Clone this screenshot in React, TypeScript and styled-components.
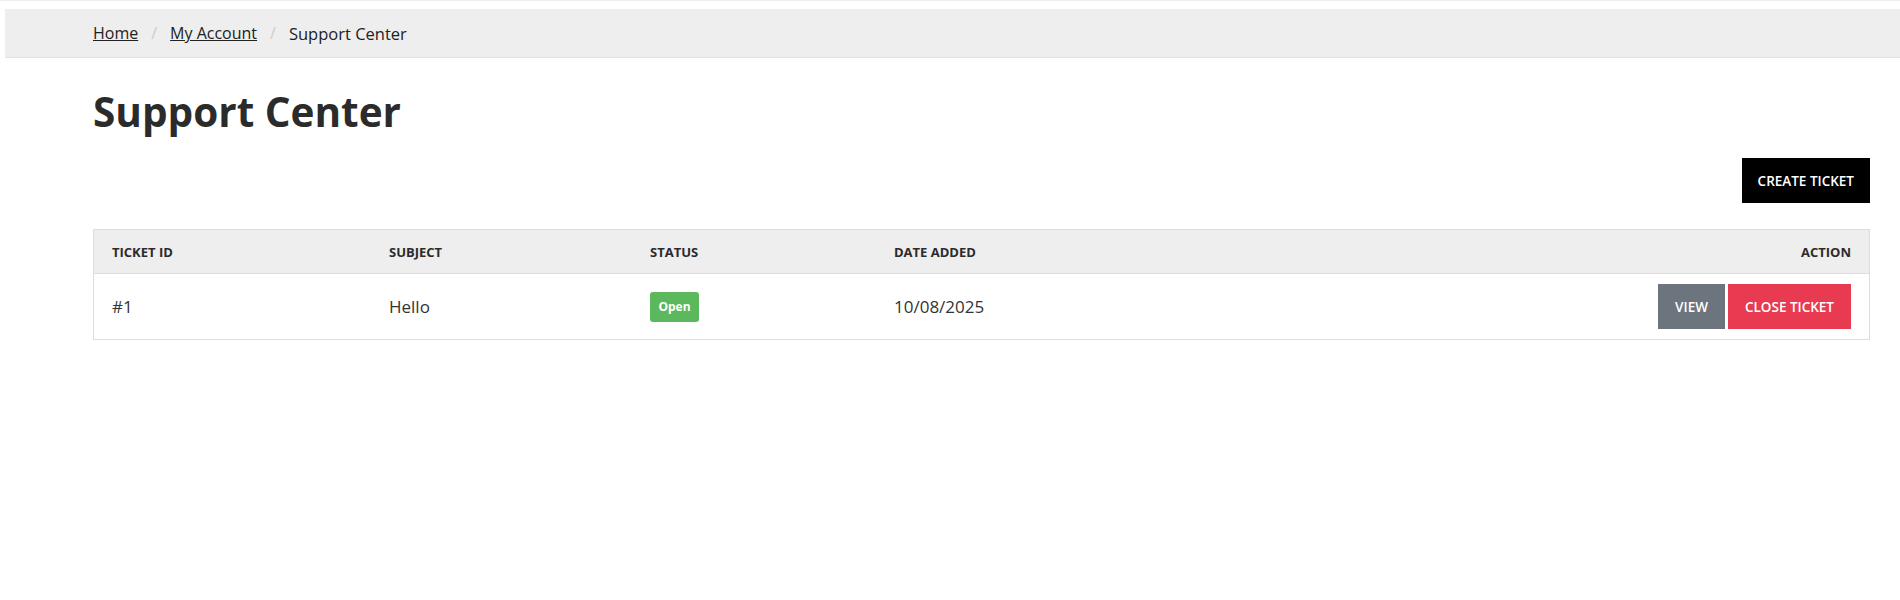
import styled, { createGlobalStyle } from "styled-components";

const GlobalStyle = createGlobalStyle`
    body {
        margin: 0;
        background: #fff;
        font-family: "Open Sans", "Liberation Sans", sans-serif;
        color: #333;
    }
`;

const Page = styled.div`
    padding: 8px 0 0 5px;
    border-top: 1px solid #eee;
`;

const Breadcrumb = styled.nav`
    display: flex;
    align-items: center;
    height: 48px;
    padding-left: 88px;
    background: #eee;
    border-bottom: 1px solid #e2e2e2;
    font-size: 16px;

    a {
        color: #222;
        text-decoration: underline;
    }

    span.sep {
        color: #ccc;
        padding: 0 13px;
    }

    span.current {
        color: #222;
        font-size: 16.5px;
    }
`;

const Container = styled.main`
    padding: 0 30px 0 88px;
`;

const Title = styled.h1`
    margin: 29px 0 0;
    font-size: 40.5px;
    font-weight: 700;
    line-height: 50px;
    color: #2b2b2b;
`;

const Toolbar = styled.div`
    display: flex;
    justify-content: flex-end;
    margin-top: 21px;
`;

const Button = styled.button<{ $variant: "dark" | "grey" | "red" }>`
    border: none;
    font-family: inherit;
    font-size: 13.5px;
    font-weight: 600;
    text-transform: uppercase;
    color: #fff;
    height: 45px;
    padding: 0 ${props => (props.$variant === "dark" ? "16px" : "17px")};
    cursor: pointer;
    background: ${props =>
        props.$variant === "dark" ? "#000" : props.$variant === "grey" ? "#6c757d" : "#e83a50"};
`;

const Table = styled.div`
    margin-top: 26px;
    border: 1px solid #ddd;
`;

const Row = styled.div<{ $head?: boolean }>`
    display: grid;
    grid-template-columns: 277px 261px 244px 1fr auto;
    align-items: center;
    padding: 0 18px;
    height: ${props => (props.$head ? "43px" : "65px")};
    background: ${props => (props.$head ? "#eee" : "#fff")};
    border-bottom: ${props => (props.$head ? "1px solid #ddd" : "none")};
    font-size: ${props => (props.$head ? "13px" : "17px")};
    font-weight: ${props => (props.$head ? 700 : 400)};
    color: ${props => (props.$head ? "#2b2b2b" : "#333")};
    text-transform: ${props => (props.$head ? "uppercase" : "none")};
`;

const Badge = styled.span`
    display: inline-flex;
    align-items: center;
    justify-content: center;
    width: 49px;
    height: 30px;
    border-radius: 3px;
    background: #5cb85c;
    color: #fff;
    font-size: 12px;
    font-weight: 700;
`;

const Actions = styled.div`
    display: flex;
    justify-content: flex-end;
    gap: 3px;
`;

const App: React.FC = () => {
    return (
        <Page>
            <GlobalStyle />
            <Breadcrumb>
                <a href="#">Home</a>
                <span className="sep">/</span>
                <a href="#">My Account</a>
                <span className="sep">/</span>
                <span className="current">Support Center</span>
            </Breadcrumb>
            <Container>
                <Title>Support Center</Title>
                <Toolbar>
                    <Button $variant="dark">Create Ticket</Button>
                </Toolbar>
                <Table>
                    <Row $head>
                        <div>Ticket ID</div>
                        <div>Subject</div>
                        <div>Status</div>
                        <div>Date Added</div>
                        <div style={{ textAlign: "right" }}>Action</div>
                    </Row>
                    <Row>
                        <div>#1</div>
                        <div>Hello</div>
                        <div>
                            <Badge>Open</Badge>
                        </div>
                        <div>10/08/2025</div>
                        <Actions>
                            <Button $variant="grey">View</Button>
                            <Button $variant="red">Close Ticket</Button>
                        </Actions>
                    </Row>
                </Table>
            </Container>
        </Page>
    );
};

export default App;
